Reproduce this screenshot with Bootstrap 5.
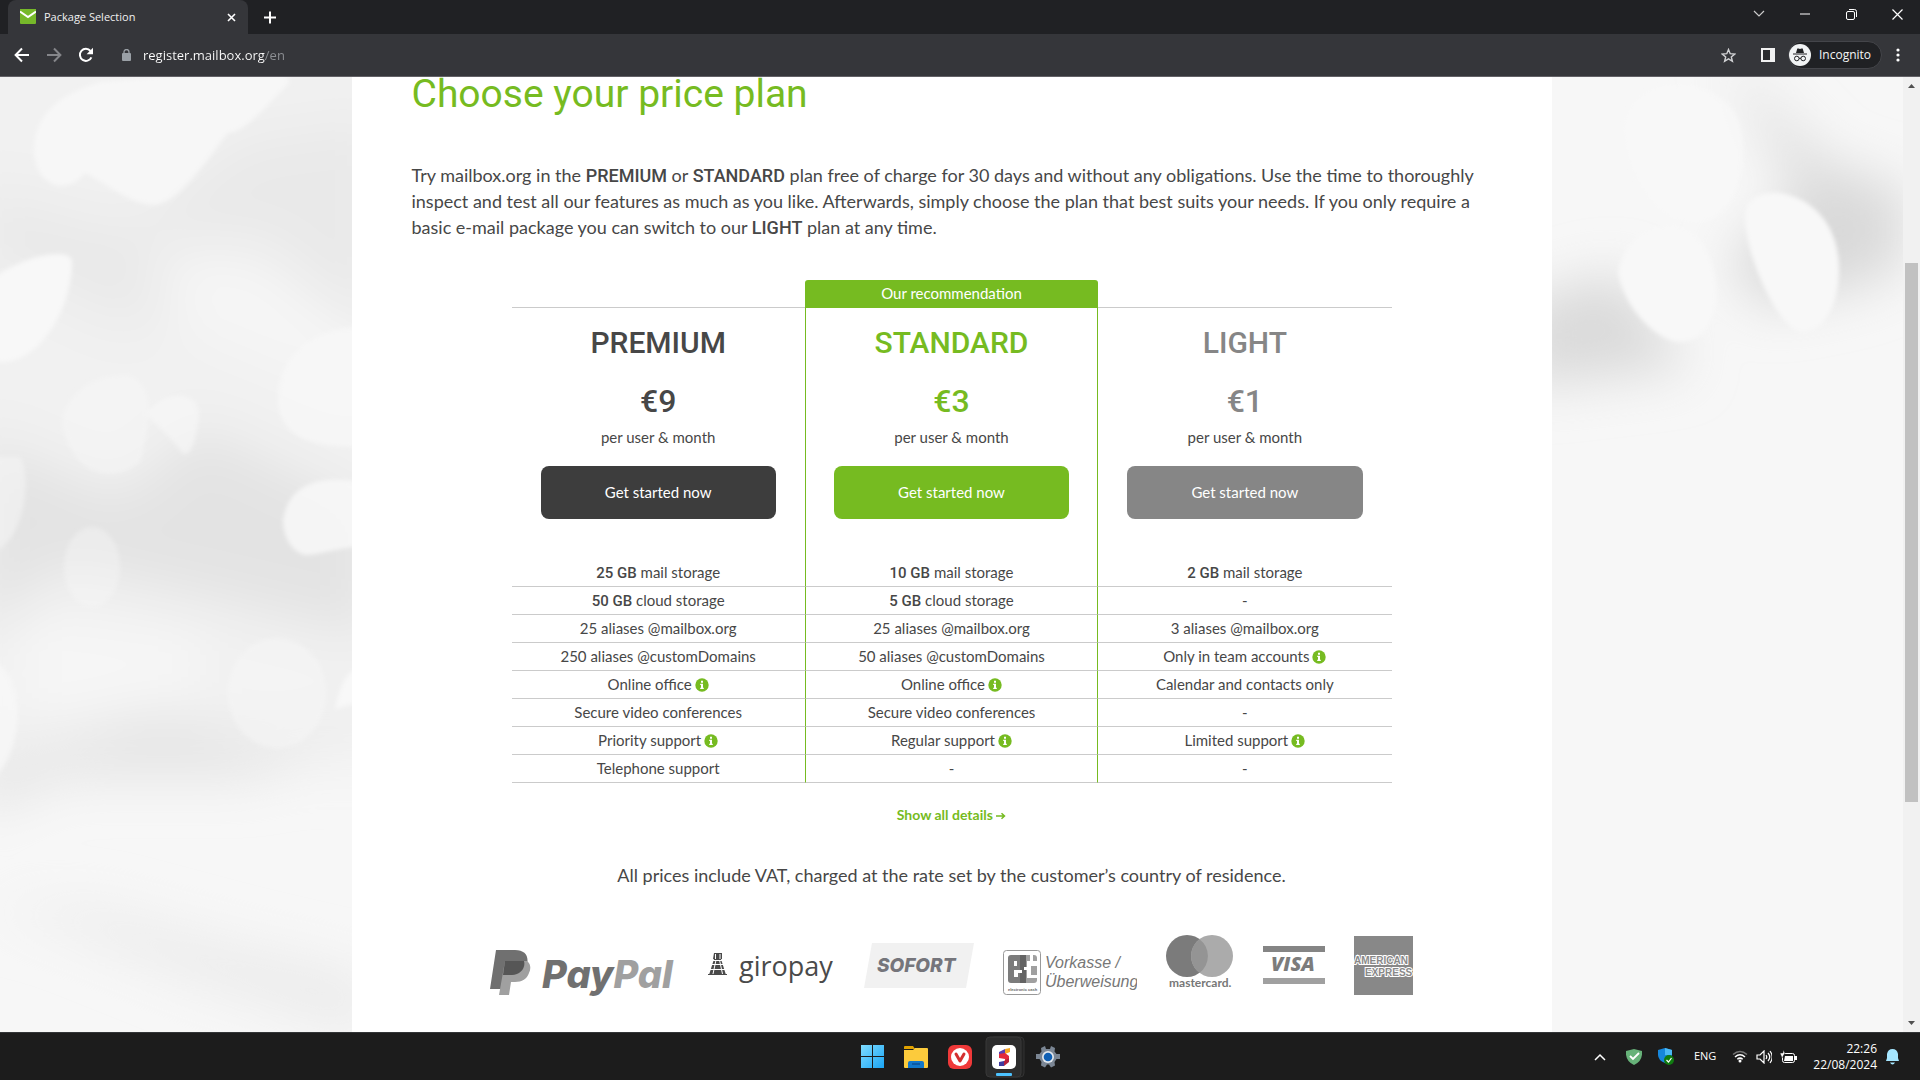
<!DOCTYPE html>
<html lang="en">
<head>
<meta charset="utf-8">
<meta name="viewport" content="width=device-width, initial-scale=1">
<title>Package Selection</title>
<link href="https://cdn.jsdelivr.net/npm/bootstrap@5.3.0/dist/css/bootstrap.min.css" rel="stylesheet">
<style>
:root{--green:#76bb21;--ink:#474747;--rule:#cbcbcb}
body{font-family:Lato,Roboto,sans-serif;color:var(--ink);background:#f7f7f7}
.ui{font-family:"Open Sans","Noto Sans",sans-serif}
button{border:0;background:none;padding:0;color:inherit}
svg{display:block;flex:none}
/* browser frame */
.tabstrip{background:#202124;height:34px;color:#fff}
.tab-active{background:#35363a;width:240px;height:34px;border-radius:8px 8px 0 0;padding:0 12px;margin-left:8px}
.tab-name{font-size:11px;line-height:26px;color:#f1f1f1}
.win-btn{width:46px;height:28px;display:flex;align-items:center;justify-content:center}
.toolbar{background:#35363a;height:43px;border-bottom:1px solid #626166;color:#fff;padding:0 6px}
.tool-btn{width:32px;height:32px;display:flex;align-items:center;justify-content:center}
.address{border:0;padding:0;font-size:13px;line-height:20px;outline:0;color:transparent;background:linear-gradient(90deg,#fff 122px,#8d9094 122px);-webkit-background-clip:text;background-clip:text}
.pill{background:#202124;border:1px solid #44454a;border-radius:14px;height:28px;width:94px;font-size:12px;color:#f5f5f5}
/* page */
.viewport{min-height:0}
.stage{display:grid;grid-template-columns:minmax(0,1fr);grid-template-rows:minmax(0,1fr);overflow:hidden}
.stage>*{grid-area:1/1}
.sheet{width:1200px;max-width:100%;background:#fff;padding:0 60px;min-height:100%}
.sheet h1{font-family:Roboto,sans-serif;color:var(--green);font-size:39px;line-height:34px;font-weight:400;margin:0 0 51px}
.body-text{font-size:18px;line-height:26px;margin:0}
.sheet strong{font-family:Roboto,sans-serif;font-weight:500;line-height:1}
.plans{width:880px;max-width:100%;table-layout:fixed;border-collapse:separate;border-spacing:0;margin:40px auto 0;text-align:center;font-size:15px;line-height:27px}
.plans th,.plans td{padding:0;font-weight:400}
.plans .lined>*{border-bottom:1px solid var(--rule)}
.plans .pick{border-left:1px solid var(--green);border-right:1px solid var(--green)}
.plans .flag{background:var(--green);border-color:var(--green)!important;color:#fff;border-radius:3px 3px 0 0}
.plan-head{padding:17px 29px 40px}
.pick .plan-head{padding-left:28px;padding-right:28px}
.plan-title,.plan-cost{font-family:Roboto,sans-serif;font-size:30px;line-height:36px;font-weight:500;margin-bottom:22px}
.plan-cost{font-size:32px;margin-bottom:8px}
.plan-unit{line-height:20px;margin-bottom:19px}
.start{height:53px;width:100%;border-radius:8px;color:#fff;font-size:15px}
.c-dark{color:#474747}.c-green{color:var(--green)}.c-grey{color:#868686}
.b-dark{background:#3d3d3d}.b-green{background:var(--green)}.b-grey{background:#868686}
.info{vertical-align:-2px;display:inline-block;margin-left:3px}
.more{color:var(--green);font-size:14px;line-height:20px;font-weight:700;text-decoration:none}
.more-line{margin-top:22px;line-height:20px;font-size:14px}
.vat{margin-top:37px}
.pay{gap:29px;margin-top:47px;height:61px}
.rail{width:17px;background:#f1f1f1;flex:none}
.track-gap{height:18.3%}
.thumb{background:#c1c1c1;height:58.6%;width:13px;margin:0 auto}
/* taskbar */
.taskbar{height:48px;background:#1c1c1c;border-top:1px solid #333537;display:grid;grid-template-columns:1fr auto 1fr;color:#fff}
.app{width:44px;height:47px;display:flex;align-items:center;justify-content:center}
.tray{gap:8px;font-size:11px;padding-right:20px}
.clock{font-size:12px;line-height:16px;text-align:right}
</style>
</head>
<body>
<div class="vh-100 d-flex flex-column overflow-hidden">
<header class="ui">
  <div class="tabstrip d-flex">
    <div class="tab-active d-flex align-items-start">
      <svg class="mt-2" width="16" height="17" viewBox="0 0 16 17"><path d="M0 1h16v14a1 1 0 0 1-1 1H1a1 1 0 0 1-1-1z" fill="#76b82a"/><path d="M0 3.500L8 9l8-5.500" fill="none" stroke="#fff" stroke-width="2"/></svg>
      <span class="tab-name ms-2 flex-grow-1 pt-1">Package Selection</span>
      <button class="mt-1 pt-2" aria-label="Close tab"><svg width="9" height="11" viewBox="0 0 9 11"><path d="M1 2l7 7M8 2L1 9" stroke="#fff" stroke-width="1.600"/></svg></button>
    </div>
    <button class="ms-3" aria-label="New tab"><svg width="12" height="13" viewBox="0 0 12 12"><path d="M6 0v12M0 6h12" stroke="#fff" stroke-width="2"/></svg></button>
    <div class="d-flex ms-auto">
      <button class="win-btn" aria-label="Search tabs"><svg width="12" height="8" viewBox="0 0 12 8"><path d="M1 1l5 5 5-5" fill="none" stroke="#ccc" stroke-width="1.200"/></svg></button>
      <button class="win-btn" aria-label="Minimise"><svg width="10" height="2"><path d="M0 1h10" stroke="#fff"/></svg></button>
      <button class="win-btn" aria-label="Restore"><svg width="11" height="11" viewBox="0 0 11 11" fill="none" stroke="#fff"><rect x=".5" y="2.500" width="8" height="8" rx="1.500"/><path d="M3 .5h5.500a2 2 0 0 1 2 2V8"/></svg></button>
      <button class="win-btn" aria-label="Close"><svg width="11" height="11" viewBox="0 0 11 11"><path d="M.5.5l10 10M10.500.5l-10 10" stroke="#fff" stroke-width="1.200"/></svg></button>
    </div>
  </div>
  <nav class="toolbar d-flex align-items-center" aria-label="Browser">
    <button class="tool-btn" aria-label="Back"><svg width="16" height="16" viewBox="0 0 16 16" fill="none" stroke="#fff" stroke-width="2"><path d="M15 8H2M8 1.500L1.600 8 8 14.500"/></svg></button>
    <button class="tool-btn" aria-label="Forward"><svg width="16" height="16" viewBox="0 0 16 16" fill="none" stroke="#85868a" stroke-width="2"><path d="M1 8h13M8 1.500L14.400 8 8 14.500"/></svg></button>
    <button class="tool-btn" aria-label="Reload"><svg width="16" height="16" viewBox="0 0 16 16"><path d="M13.400 10.300A6 6 0 1 1 12.500 4" fill="none" stroke="#fff" stroke-width="2"/><path d="M15 .8v6.400H8.600z" fill="#fff"/></svg></button>
    <label class="d-flex align-items-center flex-grow-1 ms-3 ps-1">
      <svg class="me-2" width="9" height="12" viewBox="0 0 9 12"><rect y="4" width="9" height="8" rx="1" fill="#9aa0a6"/><path d="M2 5V3a2.500 2.500 0 0 1 5 0v2" fill="none" stroke="#9aa0a6" stroke-width="1.300"/></svg>
      <input class="address flex-grow-1 ms-1" type="text" value="register.mailbox.org/en" aria-label="Address">
    </label>
    <button class="tool-btn me-2" aria-label="Bookmark"><svg width="15" height="15" viewBox="0 0 15 15"><path d="M7.500 1.500l1.700 4.200 4.600.3-3.500 2.900 1.100 4.400-3.900-2.400-3.900 2.400 1.100-4.400L1.200 6l4.600-.3z" fill="none" stroke="#d2d3d5" stroke-width="1.400"/></svg></button>
    <button class="tool-btn" aria-label="Side panel"><svg width="14" height="14"><rect width="14" height="14" fill="#f1f1f1"/><rect x="2" y="2" width="7" height="10" fill="#2b2c2f"/></svg></button>
    <button class="pill d-flex align-items-center ms-1"><svg width="22" height="22" viewBox="0 0 22 22"><circle cx="11" cy="11" r="11" fill="#f1f3f4"/><path d="M7 9l1.300-4.500h1.200l1.500.6 1.500-.6h1.200L15 9zM4 9.500h14v1H4z" fill="#202124"/><g fill="none" stroke="#202124"><circle cx="7.800" cy="14.500" r="2.300"/><circle cx="14.200" cy="14.500" r="2.300"/><path d="M10 14.300h2"/></g></svg><span class="ms-2">Incognito</span></button>
    <button class="tool-btn" aria-label="Menu"><svg width="4" height="14" fill="#fff"><circle cx="2" cy="2" r="1.600"/><circle cx="2" cy="7" r="1.600"/><circle cx="2" cy="12" r="1.600"/></svg></button>
  </nav>
</header>

<div class="viewport d-flex flex-grow-1">
<div class="stage flex-grow-1">
  <svg class="w-100 h-100" viewBox="0 0 1903 955" preserveAspectRatio="xMinYMin slice" aria-hidden="true">
    <defs><filter id="soft" x="-50%" y="-50%" width="200%" height="200%"><feGaussianBlur stdDeviation="26"/></filter><filter id="edge"><feGaussianBlur stdDeviation="2"/></filter></defs>
    <rect width="1903" height="955" fill="#f7f7f7"/>
    <g filter="url(#soft)">
      <path d="M-60-60H420V690H-60z" fill="#f1f1f1"/>
      <path d="M-20 110L130 150 240 60 380 40V250L240 190 130 250-20 180z" fill="#e9e9e9"/>
      <path d="M-20 360L120 420 200 350 370 430V560L200 520 60 490-20 560z" fill="#e3e3e3"/>
      <path d="M150 170L260 170 370 260V330L180 250z" fill="#f5f5f5"/>
      <path d="M20 540L200 560V620L20 640z" fill="#f6f6f6"/>
      <path d="M-20 690L60 670 160 640 270 670 370 640 260 700 60 700-20 740z" fill="#e4e4e4"/>
      <path d="M-20 830H90L240 870 370 900V960L210 910 60 850z" fill="#ebebeb"/>
      <path d="M1720-30L1790 50 1830 90 1903 110V190L1860 210 1760 230 1730 180 1800 120z" fill="#d9d9d9"/>
      <path d="M1520 225L1620 195 1690 290 1520 310z" fill="#dadada"/>
    </g>
    <g filter="url(#edge)" fill="#f8f8f8">
      <path d="M34 75C34 30 70 15 100 5L280-10 290 5C260 35 245 55 228 56 205 85 180 125 155 128 130 128 110 108 85 96 60 125 34 100 34 75z" fill-opacity=".85"/>
      <path d="M-5 200C20 180 72 168 72 185 72 230 40 290-5 285z"/>
      <path d="M62 345C68 310 100 297 127 298 150 305 155 330 140 385 110 410 70 395 62 345z" fill-opacity=".5"/>
      <path d="M146 336C165 310 200 315 199 338 195 370 190 380 182 376 172 360 155 348 146 336z" fill-opacity=".6"/>
      <path d="M-5 380H20C32 400 25 460-5 475z" fill-opacity=".5"/>
      <path d="M278 320C278 275 320 250 360 250V370C310 370 278 360 278 320z" fill-opacity=".8"/>
      <path d="M283 443C290 400 330 400 360 405V470C340 470 320 478 305 478 292 475 283 460 283 443z" fill-opacity=".85"/>
      <ellipse cx="92" cy="490" rx="28" ry="40" fill-opacity=".4"/>
      <ellipse cx="277" cy="616" rx="49" ry="55" fill-opacity=".5"/>
      <path d="M335 632C340 610 345 595 360 590V625z"/>
      <path d="M-5 585C25 600 25 670-5 700z" fill-opacity=".8"/>
      <path d="M1625 50C1630-5 1720-5 1739 45 1750 80 1740 140 1700 145 1660 150 1625 100 1625 50z" fill-opacity=".75"/>
      <path d="M1618 195C1625 160 1650 147 1675 148 1705 155 1718 190 1716 225 1712 255 1695 265 1680 265 1660 265 1625 235 1618 195z"/>
      <path d="M1745 140C1745 118 1765 115 1780 116 1815 122 1840 150 1839 195 1838 235 1820 256 1802 255 1780 255 1745 180 1745 140z"/>
    </g>
  </svg>
  <main class="sheet mx-auto">
    <h1>Choose your price plan</h1>
    <p class="body-text">Try mailbox.org in the <strong>PREMIUM</strong> or <strong>STANDARD</strong> plan free of charge for 30 days and without any obligations. Use the time to thoroughly inspect and test all our features as much as you like. Afterwards, simply choose the plan that best suits your needs. If you only require a basic e-mail package you can switch to our <strong>LIGHT</strong> plan at any time.</p>
    <table class="plans">
      <thead>
        <tr class="lined"><td></td><td class="flag">Our recommendation</td><td></td></tr>
        <tr>
          <th scope="col"><div class="plan-head"><div class="plan-title c-dark">PREMIUM</div><div class="plan-cost c-dark">€9</div><div class="plan-unit">per user &amp; month</div><button class="start b-dark">Get started now</button></div></th>
          <th scope="col" class="pick"><div class="plan-head"><div class="plan-title c-green">STANDARD</div><div class="plan-cost c-green">€3</div><div class="plan-unit">per user &amp; month</div><button class="start b-green">Get started now</button></div></th>
          <th scope="col"><div class="plan-head"><div class="plan-title c-grey">LIGHT</div><div class="plan-cost c-grey">€1</div><div class="plan-unit">per user &amp; month</div><button class="start b-grey">Get started now</button></div></th>
        </tr>
      </thead>
      <tbody>
        <tr class="lined"><td><strong>25 GB</strong> mail storage</td><td class="pick"><strong>10 GB</strong> mail storage</td><td><strong>2 GB</strong> mail storage</td></tr>
        <tr class="lined"><td><strong>50 GB</strong> cloud storage</td><td class="pick"><strong>5 GB</strong> cloud storage</td><td>-</td></tr>
        <tr class="lined"><td>25 aliases @mailbox.org</td><td class="pick">25 aliases @mailbox.org</td><td>3 aliases @mailbox.org</td></tr>
        <tr class="lined"><td>250 aliases @customDomains</td><td class="pick">50 aliases @customDomains</td><td>Only in team accounts<svg class="info" width="14" height="14"><use href="#i"/></svg></td></tr>
        <tr class="lined"><td>Online office<svg class="info" width="14" height="14"><use href="#i"/></svg></td><td class="pick">Online office<svg class="info" width="14" height="14"><use href="#i"/></svg></td><td>Calendar and contacts only</td></tr>
        <tr class="lined"><td>Secure video conferences</td><td class="pick">Secure video conferences</td><td>-</td></tr>
        <tr class="lined"><td>Priority support<svg class="info" width="14" height="14"><use href="#i"/></svg></td><td class="pick">Regular support<svg class="info" width="14" height="14"><use href="#i"/></svg></td><td>Limited support<svg class="info" width="14" height="14"><use href="#i"/></svg></td></tr>
        <tr class="lined"><td>Telephone support</td><td class="pick">-</td><td>-</td></tr>
      </tbody>
    </table>
    <svg width="0" height="0" class="position-absolute"><symbol id="i" viewBox="0 0 14 14"><circle cx="7" cy="7" r="6.700" fill="#76bb21"/><path d="M6 2.800h2v1.900H6zM5.200 5.800H8v4h.8V11H5.200V9.800H6V7h-.8z" fill="#fff"/></symbol></svg>
    <div class="text-center more-line"><a href="#" class="more">Show all details <svg class="d-inline-block" width="10" height="8" viewBox="0 0 10 8"><path d="M0 4h8M5.500 1.200L8.500 4 5.500 6.800" fill="none" stroke="#76bb21" stroke-width="1.500"/></svg></a></div>
    <p class="body-text text-center vat">All prices include VAT, charged at the rate set by the customer’s country of residence.</p>
    <div class="pay d-flex justify-content-center">
      <svg width="189" height="63" role="img" aria-label="PayPal"><path d="M6 15h19c10 0 14 6 12 14-2 7-8 11-16 11h-5l-3 14H0z" fill="#707070"/><path d="M15 26h22c4 3 4 8 2 12-2 6-7 9-14 9h-4l-2 13H9z" fill="#a0a0a0"/><path d="M15 26h19c2 7-4 14-12 14H13z" fill="#565656"/><text x="52" y="53" font-family="Inter" font-weight="800" font-style="italic" font-size="38" fill="#707070">Pay<tspan fill="#a0a0a0">Pal</tspan></text></svg>
      <svg width="127" height="61" role="img" aria-label="giropay"><path d="M6 18h8v6h-1l5 16H1l5-16H5z" fill="#4a4a4a"/><path d="M7.500 19v5M12 19v5M5 25.500h10M4 29.500h12M2 34.500h15M8 25l-3 14M11.500 25l3 14" stroke="#fff" stroke-width="1"/><path d="M0 39.500h19" stroke="#4a4a4a"/><text x="31" y="41" font-family="Open Sans" font-size="27" fill="#4a4a4a">giropay</text></svg>
      <svg width="110" height="61" role="img" aria-label="Sofort"><path d="M8 8h102l-8 45H0z" fill="#f1f1f1"/><text x="13" y="37" font-family="Inter" font-weight="800" font-style="italic" font-size="19" fill="#75757b">SOFORT</text></svg>
      <svg width="134" height="61" role="img" aria-label="electronic cash"><rect x=".5" y="15.500" width="37" height="44" rx="3" fill="#fff" stroke="#999"/><path d="M8 20H20V48H8q-3 0-3-3V23q0-3 3-3z" fill="#7c7c7c"/><path d="M22 20h9q3 0 3 3v22q0 3-3 3h-9z" fill="#a0a0a0"/><path d="M17 20h6v28h-6z" fill="#636363"/><path d="M11 26h3v5h-3zM11 35h8v3h-4v4h-4zM27 20h3v6h4v5h-6v9h6v3h-10v-8h-3v-3h3v-6h3z" fill="#fff"/><text x="5" y="56" font-family="Liberation Sans" font-size="4" font-weight="700" fill="#666">electronic cash</text><text font-family="Liberation Sans" font-style="italic" font-size="16" fill="#777"><tspan x="42" y="33">Vorkasse /</tspan><tspan x="42" y="52">Überweisung</tspan></text></svg>
      <svg width="68" height="61" role="img" aria-label="mastercard"><circle cx="21" cy="21" r="21" fill="#7b7b7b"/><circle cx="46" cy="21" r="21" fill="#ababab"/><path d="M33.500 4.200a21 21 0 0 1 0 33.600 21 21 0 0 1 0-33.600z" fill="#949494"/><text x="3" y="52" font-family="Lato" font-weight="700" font-size="12" fill="#777">mastercard.</text></svg>
      <svg width="62" height="61" role="img" aria-label="Visa"><path d="M0 11h62v6H0z" fill="#858585"/><path d="M0 43h62v6H0z" fill="#a0a0a0"/><text x="8" y="36" font-family="Open Sans" font-weight="800" font-style="italic" font-size="20" fill="#7c7c7c">VISA</text></svg>
      <svg width="59" height="61" role="img" aria-label="American Express"><path d="M0 1h59v59H0z" fill="#888"/><g font-family="Liberation Sans" font-weight="700" font-size="10" fill="#888" stroke="#fff" stroke-width="2" paint-order="stroke"><text x="0" y="29">AMERICAN</text><text x="11" y="41">EXPRESS</text></g></svg>
    </div>
  </main>
</div>
<div class="rail d-flex flex-column" aria-hidden="true">
  <svg width="17" height="17"><path d="M5 11l3.500-4 3.500 4z" fill="#505050"/></svg>
  <div class="flex-grow-1 d-flex flex-column"><div class="track-gap"></div><div class="thumb"></div></div>
  <svg width="17" height="17"><path d="M5 6l3.500 4L12 6z" fill="#505050"/></svg>
</div>
</div>

<footer class="taskbar ui">
  <span></span>
  <div class="d-flex">
    <button class="app" aria-label="Start"><svg width="23" height="23"><defs><linearGradient id="w" x1="0" y1="0" x2="1" y2="1"><stop stop-color="#7fdcff"/><stop offset="1" stop-color="#1aa5f5"/></linearGradient></defs><path d="M0 0h11v11H0zM12 0h11v11H12zM0 12h11v11H0zM12 12h11v11H12z" fill="url(#w)"/></svg></button>
    <button class="app" aria-label="Files"><svg width="24" height="22" viewBox="0 0 24 22"><path d="M0 1q0-1 1-1h8l2 3h-11z" fill="#e0a100"/><path d="M0 4h9l2-2h12q1 0 1 1v18q0 1-1 1H1q-1 0-1-1z" fill="#fccb3c"/><path d="M4 22v-5q0-2 2-2h12q2 0 2 2v5z" fill="#1277c9"/><path d="M8 18h8" stroke="#0b4f94" stroke-width="1.500"/></svg></button>
    <button class="app" aria-label="Vivaldi"><svg width="24" height="24"><rect width="24" height="24" rx="6" fill="#ef3939"/><circle cx="12" cy="12" r="9" fill="#fff"/><path d="M8 9l4 7 4-7" fill="none" stroke="#d32f2f" stroke-width="3" stroke-linecap="round" stroke-linejoin="round"/></svg></button>
    <button class="app" aria-label="Screenshot"><svg width="44" height="44" viewBox="0 0 44 44"><rect x="8" y="2" width="34" height="40" rx="4" fill="#222" stroke="#333"/><rect x="4" y="2" width="35" height="40" rx="4" fill="#2c2c2c" stroke="#383838"/><rect x="10" y="10" width="24" height="24" rx="5" fill="#fff"/><path d="M23 14l5-1v4l-5 2z" fill="#f5a623"/><path d="M17 17l6-3v5h-6z" fill="#5b3fb0"/><path d="M17 19l6-1 4 3v5l-4 3v-5l-6-1z" fill="#e4293b"/><path d="M17 27l5-1v5h-5z" fill="#3f3aa0"/><path d="M22 26l5-3v4l-5 4z" fill="#b3203c"/><rect x="14" y="38" width="16" height="3" rx="1" fill="#4cc2ff"/></svg></button>
    <button class="app" aria-label="Settings"><svg width="24" height="24" viewBox="0 0 24 24"><path d="M9 1l1 3h4l1-3 4 2-.5 3.500 2 2.500 3.500 0v5l-3.500 0-2 3 .5 3.500-4 2-2-3h-2l-2 3-4-2 .5-3.500-2-3L0 14V9l3.500 0 2-2.500L5 3z" fill="#7b8694"/><circle cx="12" cy="12" r="6" fill="#e3e8ee"/><circle cx="12" cy="12" r="4.300" fill="#0f5fb4"/></svg></button>
  </div>
  <div class="tray d-flex align-items-center justify-content-end">
    <button class="me-2" aria-label="Hidden icons"><svg width="12" height="8"><path d="M1 7l5-5 5 5" fill="none" stroke="#fff" stroke-width="1.500"/></svg></button>
    <svg class="ms-1 me-2" width="16" height="16"><path d="M0 2l8-2 8 2q1 10-8 14Q-1 12 0 2z" fill="#67b279"/><path d="M4 7l3 3 6-6" fill="none" stroke="#fff" stroke-width="1.800"/></svg>
    <svg class="me-2" width="16" height="17"><path d="M0 2l7-2 7 2v5q-1 6-7 8-7-3-7-8z" fill="#1687dc"/><path d="M7 0l7 2v5H7z" fill="#4ab9f5"/><circle cx="11" cy="12" r="5" fill="#107c10"/><path d="M8.500 12l2 2 3-4" fill="none" stroke="#fff" stroke-width="1.200"/></svg>
    <span class="ms-1 me-2">ENG</span>
    <button class="d-flex align-items-center gap-2" aria-label="Network, sound and battery">
      <svg width="16" height="13" fill="none" stroke-width="1.500"><path d="M1 4.500q7-6 14 0" stroke="#777"/><path d="M3 7q5-4.500 10 0M5.300 9.300q2.700-2.400 5.400 0" stroke="#fff"/><circle cx="8" cy="11" r="1.500" fill="#fff"/></svg>
      <svg width="16" height="14" fill="none" stroke="#fff" stroke-width="1.200"><path d="M1 5h3l4-4v12L4 9H1zM10 5q1.500 2 0 4M12 3q3.500 4 0 8M14 1q4.500 6 0 12"/></svg>
      <svg width="17" height="14" viewBox="0 0 17 14"><rect x="2.500" y="3.500" width="12" height="9" rx="2" fill="none" stroke="#fff"/><path d="M5 6h8v5H4zM15 6h2v4h-2z" fill="#fff"/><path d="M3 0v3H0l2 5 3-5z" fill="#fff" stroke="#1c1c1c" stroke-width=".5"/></svg>
    </button>
    <button class="d-flex align-items-center ms-2" aria-label="Clock and notifications"><span class="clock">22:26<br>22/08/2024</span>
    <svg class="ms-2" width="15" height="16"><path d="M1 12l1-3V5q1-5 5.500-5T13 5v4l1 3zM5 13.500h5q-1 2-2.500 2T5 13.500z" fill="#a5e6ff"/></svg></button>
  </div>
</footer>
</div>
<script src="https://cdn.jsdelivr.net/npm/bootstrap@5.3.0/dist/js/bootstrap.bundle.min.js"></script>
</body>
</html>
